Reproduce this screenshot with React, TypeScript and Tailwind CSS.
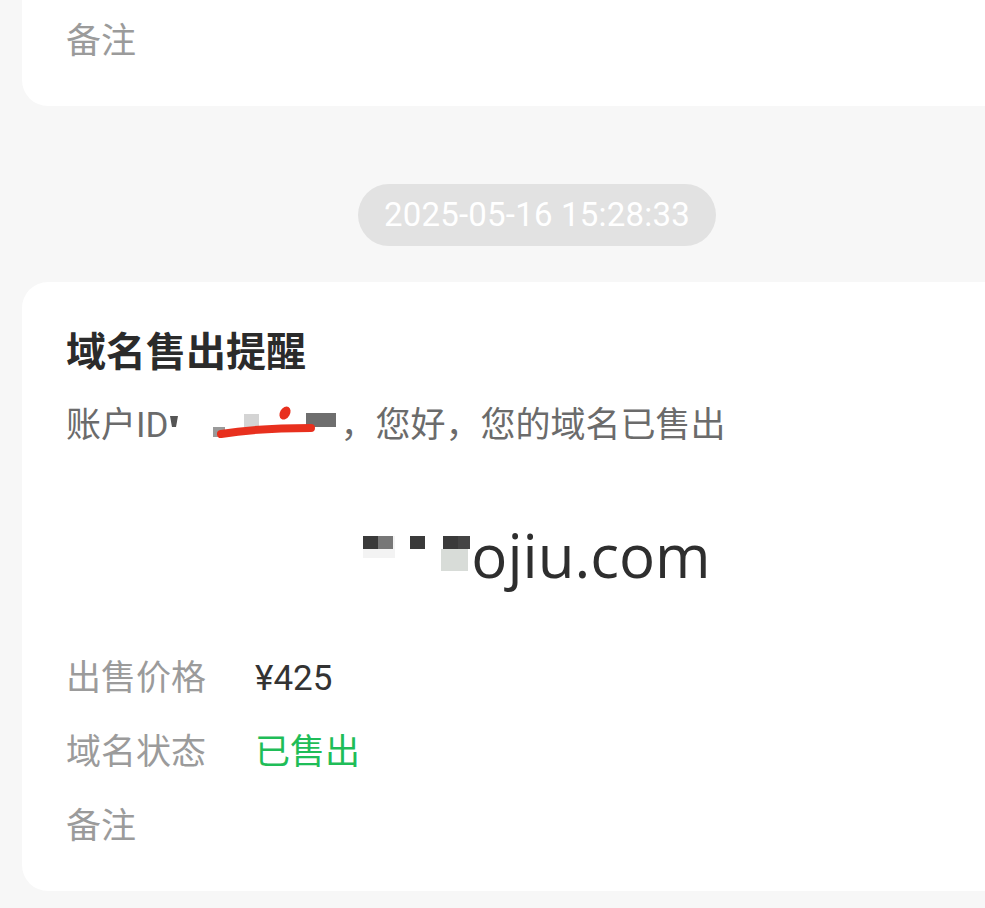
import React from 'react';

const CJK = { fontFamily: 'Roboto, "Noto Sans CJK SC", sans-serif' };

const Redacted: React.FC = () => (
  <svg width="172" height="50" viewBox="0 0 172 50" className="inline-block align-middle -mt-[4px]">
    <path d="M1 15 L9 15 L7 26 L3 26 Z" fill="#555" />
    <rect x="44" y="26" width="12" height="10" fill="#9a9a9a" />
    <rect x="75" y="13" width="15" height="13" fill="#d4d4d4" />
    <rect x="137" y="12" width="30" height="14" fill="#6e6e6e" />
    <ellipse cx="116" cy="12" rx="5" ry="7" transform="rotate(30 116 12)" fill="#e8301e" />
    <path d="M52 33 C77 29 112 27 142 27" stroke="#e8301e" strokeWidth="8" strokeLinecap="round" fill="none" />
  </svg>
);

const DomainMask: React.FC = () => (
  <svg width="108" height="60" viewBox="0 0 108 60" className="inline-block align-middle -mt-[2px]">
    <rect x="0" y="12" width="32" height="22" fill="#f3f3f3" />
    <rect x="0" y="12" width="15" height="13" fill="#3a3a3a" />
    <rect x="15" y="12" width="15" height="13" fill="#777" />
    <rect x="47" y="12" width="15" height="13" fill="#3a3a3a" />
    <rect x="80" y="12" width="15" height="13" fill="#3a3a3a" />
    <rect x="78" y="25" width="27" height="22" fill="#d8dcd8" />
    <rect x="95" y="12" width="12" height="13" fill="#444" />
  </svg>
);

const Row: React.FC<{ label: string; value?: string; valueClass?: string }> = ({ label, value, valueClass }) => (
  <div className="flex items-center h-[74px] text-[35px]">
    <span className="w-[189px] text-[#9b9b9b]">{label}</span>
    {value && <span className={valueClass}>{value}</span>}
  </div>
);

export default function App() {
  return (
    <div className="w-[985px] h-[908px] overflow-hidden bg-[#f7f7f7]" style={CJK}>
      <div className="w-[1074px] px-[22px]">
        <div className="bg-white rounded-b-[26px] px-[44px] pt-[5px] pb-[27px]">
          <Row label="备注" />
        </div>

        <div className="flex justify-center mt-[78px] mb-[36px]">
          <div className="w-[358px] h-[62px] rounded-full bg-[#e2e2e2] flex items-center justify-center text-white text-[33px] tracking-[0.2px]">
            2025-05-16 15:28:33
          </div>
        </div>

        <div className="bg-white rounded-[26px] px-[44px] pt-[43px] pb-[27px]">
          <div className="text-[40px] leading-[56px] font-bold text-[#2b2b2b]">域名售出提醒</div>
          <div className="mt-[20px] text-[35px] leading-[50px] text-[#6b6b6b] whitespace-nowrap">
            账户ID<Redacted />，您好，您的域名已售出
          </div>
          <div
            className="mt-[64px] h-[80px] flex items-center justify-center text-[60px] text-[#2e2e2e]"
            style={{ fontFamily: '"Open Sans", Roboto, sans-serif' }}
          >
            <DomainMask />
            <span>ojiu.com</span>
          </div>
          <div className="mt-[47px]">
            <Row label="出售价格" value="¥425" valueClass="text-[#333]" />
            <Row label="域名状态" value="已售出" valueClass="text-[#1fbd58]" />
            <Row label="备注" />
          </div>
        </div>
      </div>
    </div>
  );
}
